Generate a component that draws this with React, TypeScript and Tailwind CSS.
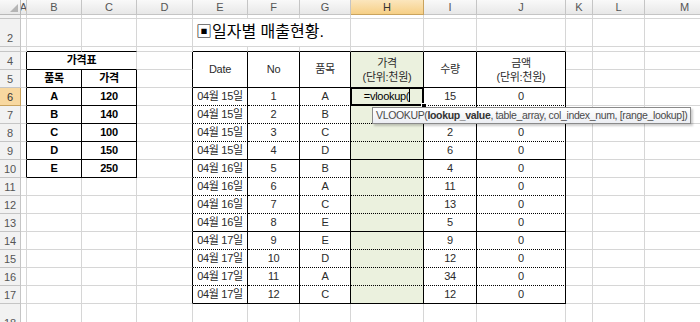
import React from 'react';

const LETTERS = ['A', 'B', 'C', 'D', 'E', 'F', 'G', 'H', 'I', 'J', 'K', 'L', 'M'];

const prices: [string, string][] = [
  ['A', '120'],
  ['B', '140'],
  ['C', '100'],
  ['D', '150'],
  ['E', '250'],
];

// date, no, item, qty, amount (row 7's qty/amount sit under the tooltip)
const sales: string[][] = [
  ['04월 15일', '1', 'A', '15', '0'],
  ['04월 15일', '2', 'B', '', ''],
  ['04월 15일', '3', 'C', '2', '0'],
  ['04월 15일', '4', 'D', '6', '0'],
  ['04월 16일', '5', 'B', '4', '0'],
  ['04월 16일', '6', 'A', '11', '0'],
  ['04월 16일', '7', 'C', '13', '0'],
  ['04월 16일', '8', 'E', '5', '0'],
  ['04월 17일', '9', 'E', '9', '0'],
  ['04월 17일', '10', 'D', '12', '0'],
  ['04월 17일', '11', 'A', '34', '0'],
  ['04월 17일', '12', 'C', '12', '0'],
];

const ROWS = 18;

const TwoLine = ({ top, bottom }: { top: string; bottom: string }) => (
  <div className="flex flex-col items-center leading-[14px]">
    <span>{top}</span>
    <span>{bottom}</span>
  </div>
);

interface CellInfo {
  skip?: boolean;
  node?: React.ReactNode;
  span?: string;
  extra?: string;
}

const getCell = (r: number, c: number): CellInfo => {
  // title
  if (r === 2 && c === 5) {
    return {
      span: 'col-span-3',
      extra: 'justify-start! items-end! pb-[2px] pl-[3px] text-[16px] tracking-normal! text-black',
      node: '▣일자별 매출현황.',
    };
  }
  if (r === 2 && (c === 6 || c === 7)) return { skip: true };

  // price table
  if (r === 4 && c === 2) return { span: 'col-span-2', extra: 'font-bold text-black', node: '가격표' };
  if (r === 4 && c === 3) return { skip: true };
  if (r === 5 && c === 2) return { extra: 'font-bold text-black', node: '품목' };
  if (r === 5 && c === 3) return { extra: 'font-bold text-black', node: '가격' };
  if (r >= 6 && r <= 10 && (c === 2 || c === 3)) {
    return { extra: 'font-bold text-black', node: prices[r - 6][c - 2] };
  }

  // sales table header
  if (r === 4 && c >= 5 && c <= 10) {
    const heads: React.ReactNode[] = [
      'Date',
      'No',
      '품목',
      <TwoLine top="가격" bottom="(단위:천원)" />,
      '수량',
      <TwoLine top="금액" bottom="(단위:천원)" />,
    ];
    return { span: 'row-span-2', node: heads[c - 5], extra: c === 8 ? 'bg-[#ebf1de]' : '' };
  }
  if (r === 5 && c >= 5 && c <= 10) return { skip: true };

  // sales rows
  if (r >= 6 && r <= 17 && c >= 5 && c <= 10) {
    const row = sales[r - 6];
    if (c === 5) return { node: row[0] };
    if (c === 6) return { node: row[1] };
    if (c === 7) return { node: row[2] };
    if (c === 9) return { node: row[3] };
    if (c === 10) return { node: row[4] };
    if (r === 6) {
      return {
        extra: 'bg-[#ebf1de] z-20',
        node: (
          <>
            <span className="text-black">
              =vlookup(<span className="inline-block h-[13px] w-px bg-black align-[-2px]" />
            </span>
            <span className="pointer-events-none absolute -inset-px border-2 border-black" />
            <span className="absolute -bottom-[4px] -right-[4px] h-[6px] w-[6px] border border-white bg-black" />
            <div className="absolute left-[21px] top-[19px] z-30 whitespace-nowrap border border-[#8a8a8a] bg-linear-to-b from-white to-[#eceef3] px-[3px] py-px text-[10.5px] leading-[13px] tracking-[-0.35px] text-[#4a4a4a] shadow-[2px_2px_2px_rgba(0,0,0,0.2)]">
              VLOOKUP(<b className="text-[#333]">lookup_value</b>, table_array, col_index_num, [range_lookup])
            </div>
          </>
        ),
      };
    }
    return { extra: 'bg-[#ebf1de]' };
  }

  return {};
};

const rightBlack = (r: number, c: number) => {
  if (r >= 4 && r <= 10 && (c === 1 || c === 3)) return true;
  if (r >= 5 && r <= 10 && c === 2) return true;
  if (r >= 4 && r <= 17 && c >= 4 && c <= 10) return true;
  return false;
};

const bottomStyle = (r: number, c: number): 'grid' | 'solid' | 'dotted' => {
  if ((c === 2 || c === 3) && r >= 3 && r <= 10) return 'solid';
  if (c >= 5 && c <= 10) {
    if (r === 3 || r === 4 || r === 9 || r === 13 || r === 17) return 'solid';
    if (r >= 6 && r <= 16) return 'dotted';
  }
  return 'grid';
};

const SheetCell = ({ r, c }: { r: number; c: number }) => {
  const info = getCell(r, c);
  if (info.skip) return null;
  const b = bottomStyle(r, c);
  return (
    <div
      className={[
        'relative flex items-center justify-center whitespace-nowrap border-r border-b text-[11px] tracking-[-0.3px] text-[#2b2b2b]',
        rightBlack(r, c) ? 'border-r-black' : 'border-r-[#d6d6d6]',
        b === 'grid' ? 'border-b-[#d6d6d6]' : 'border-b-black',
        b === 'dotted' ? '[border-bottom-style:dotted]!' : '',
        info.span ?? '',
        info.extra ?? '',
      ].join(' ')}
    >
      {info.node}
    </div>
  );
};

const App: React.FC = () => {
  const rows = Array.from({ length: ROWS }, (_, i) => i + 1);

  return (
    <div className="h-[322px] w-[700px] overflow-hidden bg-white [font-family:Liberation_Sans,Noto_Sans_CJK_KR,sans-serif]">
      <div className="grid grid-cols-[21px_6px_55px_55px_56px_55px_52px_51px_73px_53px_89px_27px_52px_80px] grid-rows-[15px_4px_28px_5px_repeat(14,18px)_28px]">
        {/* column header row */}
        <div className="relative border-r border-b border-[#b9b9b9] bg-linear-to-b from-[#f9f9f9] to-[#e8e8e8]">
          <svg className="absolute bottom-[2px] right-[2px]" width="8" height="8" viewBox="0 0 8 8">
            <polygon points="8,0 8,8 0,8" fill="#b5b5b5" />
          </svg>
        </div>
        {LETTERS.map((l) => (
          <div
            key={l}
            className={
              l === 'H'
                ? 'flex items-center justify-center overflow-hidden border-r border-b border-[#c9a35e] bg-linear-to-b from-[#fbe6bd] to-[#f6cf85] text-[11px] text-[#333]'
                : 'flex items-center justify-center overflow-hidden border-r border-b border-[#c5c5c5] bg-linear-to-b from-[#f9f9f9] to-[#e8e8e8] text-[11px] text-[#555]'
            }
          >
            {l}
          </div>
        ))}

        {rows.map((r) => (
          <React.Fragment key={r}>
            <div
              className={
                r === 6
                  ? 'flex items-end justify-center overflow-hidden border-r border-b border-[#c9a35e] bg-[#f8d8a0] pb-px text-[11px] leading-[14px] text-[#333]'
                  : 'flex items-end justify-center overflow-hidden border-r border-b border-[#c5c5c5] bg-[#f2f2f2] pb-px text-[11px] leading-[14px] text-[#555]'
              }
            >
              {r}
            </div>
            {LETTERS.map((_, i) => (
              <SheetCell key={i} r={r} c={i + 1} />
            ))}
          </React.Fragment>
        ))}
      </div>
    </div>
  );
};

export default App;
